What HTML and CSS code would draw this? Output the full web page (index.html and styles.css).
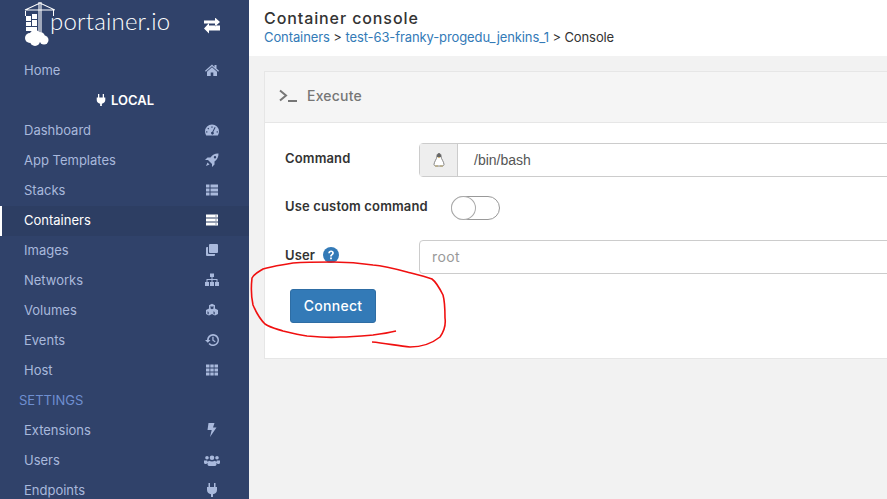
FILE: index.html
```html
<!DOCTYPE html>
<html lang="en">
<head>
    <meta charset="UTF-8">
    <title>Container console</title>
    <link rel="stylesheet" href="styles.css">
</head>
<body>
    <div class="sidebar">
        <div class="brand">
            <div class="logo">
                <svg class="logo-mark" width="31" height="44" viewBox="0 0 31 44">
                    <path d="M15 0v30M17 0v30M1 8L16 1l15 7M1 8h29" fill="none" stroke="#fff" stroke-width="1.100"/>
                    <path d="M29 8h1v6h-1z" fill="#fff"/>
                    <path d="M1 9h1v5H1zM2 14h5v5H2zM8 12h5v5H8zM2 20h5v4H2zM8 18h5v6H8zM2 25h11v4H2z" fill="#fff"/>
                    <circle cx="6" cy="36" r="5" fill="#fff"/>
                    <circle cx="11" cy="33.500" r="5.500" fill="#fff"/>
                    <circle cx="16" cy="35" r="5" fill="#fff"/>
                    <circle cx="20" cy="38" r="4.500" fill="#fff"/>
                    <circle cx="11" cy="39" r="5" fill="#fff"/>
                </svg>
                <span class="logo-text">portainer.io</span>
            </div>
            <svg class="toggle-icon" width="18" height="16" viewBox="0 0 18 16">
                <path d="M1 3h11V0l5 4.500L12 9V6H1zM17 8H6V5.500L1 11l5 5v-3h11z" fill="#fff" transform="translate(0 -.5)"/>
            </svg>
        </div>
        <ul class="nav">
            <li class="nav-item"><span>Home</span>
                <svg class="icon" viewBox="0 0 14 14"><path d="M7 1.500L0 7.800l.8.900L7 3.200l6.200 5.500.8-.900-2.500-2.200V2h-2v2zM2 8.700V13h3.700V9.500h2.600V13H12V8.700L7 4.300z"/></svg>
            </li>
            <li class="nav-title"><svg class="icon-small" viewBox="0 0 14 14"><path d="M3.500 0h1.500v4H9V0h1.500v4H12v3c0 2.500-2 4-4 4.300V14H6v-2.700C4 11 2 9.500 2 7V4h1.500z"/></svg> LOCAL</li>
            <li class="nav-item"><span>Dashboard</span>
                <svg class="icon" viewBox="0 0 14 14"><path fill-rule="evenodd" d="M7 1.500a7 7 0 0 0-7 7c0 1.500.5 2.800 1.200 4h11.600c.7-1.200 1.200-2.500 1.200-4a7 7 0 0 0-7-7zM7 3.200l.9.900-.9.900-.9-.9zM3.300 4.700l.9.900-.9.900-.9-.9zM1.800 8l.9.900-.9.900-.9-.9zM9.700 4l.9.400L8.300 9a1.400 1.400 0 1 1-1-.3zM12.200 8l.9.900-.9.900-.9-.9z"/></svg>
            </li>
            <li class="nav-item"><span>App Templates</span>
                <svg class="icon" viewBox="0 0 14 14"><path fill-rule="evenodd" d="M13.500.500C10 .300 7.500 1.800 5.500 4.500H2.500L0 7h3l4 4v3l2.500-2.500v-3c2.700-2 4.200-4.500 4-8.500zM10 3a1.200 1.200 0 1 1 0 2.400A1.200 1.200 0 0 1 10 3zM2.500 9.500L1 13l3.500-1.500z"/></svg>
            </li>
            <li class="nav-item"><span>Stacks</span>
                <svg class="icon" viewBox="0 0 14 14"><path d="M1 1.500h3.500v3H1zM5.500 1.500H13v3H5.500zM1 5.500h3.500v3H1zM5.500 5.500H13v3H5.500zM1 9.500h3.500v3H1zM5.500 9.500H13v3H5.500z"/></svg>
            </li>
            <li class="nav-item active"><span>Containers</span>
                <svg class="icon" viewBox="0 0 14 14"><path fill-rule="evenodd" d="M1 1.500h12v3H1zM1 5.500h12v3H1zM1 9.500h12v3H1zM10 2.700v.6h2v-.6zM10 6.700v.6h2v-.6zM10 10.700v.6h2v-.6z"/></svg>
            </li>
            <li class="nav-item"><span>Images</span>
                <svg class="icon" viewBox="0 0 14 14"><path d="M5 1h7a1 1 0 0 1 1 1v7a1 1 0 0 1-1 1H5a1 1 0 0 1-1-1V2a1 1 0 0 1 1-1zM3 4v6a1 1 0 0 0 1 1h6v1a1 1 0 0 1-1 1H2a1 1 0 0 1-1-1V5a1 1 0 0 1 1-1z"/></svg>
            </li>
            <li class="nav-item"><span>Networks</span>
                <svg class="icon" viewBox="0 0 16 14"><path d="M6 .500h4v3.500H8.500v2H13.500v3h1.500v4h-4v-4h1.500v-2h-4v2H10v4H6v-4h1.500v-2h-4v2H5v4H1v-4h1.500v-3h5v-2H6z"/></svg>
            </li>
            <li class="nav-item"><span>Volumes</span>
                <svg class="icon" viewBox="0 0 14 14"><path fill-rule="evenodd" d="M7 .800l3 1.500v3.200l3 1.400v4l-3 1.700-3-1.600-3 1.600-3-1.700v-4l3-1.400V2.300zM5.500 3v2.500L7 6.300l1.500-.8V3L7 3.800zM2.500 8.300v2.500l1.200.7V9zM8.500 8.300v2.500l1.200.7V9z"/></svg>
            </li>
            <li class="nav-item"><span>Events</span>
                <svg class="icon" viewBox="0 0 14 14"><path d="M8 1a6 6 0 1 1-4.500 10l1.200-1.100A4.400 4.400 0 1 0 3.700 7H5.500L2.800 9.800 0 7h2A6 6 0 0 1 8 1zM7.300 3.800h1.300v3.200l2 1.300-.7 1-2.600-1.700z"/></svg>
            </li>
            <li class="nav-item"><span>Host</span>
                <svg class="icon" viewBox="0 0 14 14"><path d="M1 1.500h3.500v3H1zM5.300 1.500h3.400v3H5.300zM9.500 1.500H13v3H9.500zM1 5.500h3.500v3H1zM5.300 5.500h3.400v3H5.300zM9.500 5.500H13v3H9.500zM1 9.500h3.500v3H1zM5.300 9.500h3.400v3H5.300zM9.500 9.500H13v3H9.500z"/></svg>
            </li>
            <li class="nav-section">SETTINGS</li>
            <li class="nav-item"><span>Extensions</span>
                <svg class="icon" viewBox="0 0 14 14"><path d="M3.500 0h6L8 4.500h3.500L5 14l1.700-7H2.500z"/></svg>
            </li>
            <li class="nav-item"><span>Users</span>
                <svg class="icon" viewBox="0 0 16 14"><path d="M8 2.500a2.300 2.300 0 1 1 0 4.600 2.300 2.300 0 0 1 0-4.600zM3 3a1.800 1.800 0 1 1 0 3.600A1.800 1.800 0 0 1 3 3zM13 3a1.800 1.800 0 1 1 0 3.600A1.800 1.800 0 0 1 13 3zM0 7.500h3.200c.2 1 .8 1.500 1.300 2-1.200.4-1.800 1-2 1.500C.5 11 0 10.500 0 9.500zM12.800 7.500H16v2c0 1-.5 1.500-2.500 1.500-.2-.5-.8-1.100-2-1.500.5-.5 1.100-1 1.300-2zM5 7.700c1.800 1 4.200 1 6 0 1 .3 1.500 2 1.500 3.500 0 1-1 1.800-2 1.800h-5c-1 0-2-.8-2-1.800 0-1.500.5-3.200 1.500-3.500z"/></svg>
            </li>
            <li class="nav-item"><span>Endpoints</span>
                <svg class="icon" viewBox="0 0 14 14"><path d="M3.500 0h1.500v4H9V0h1.500v4H12v3c0 2.500-2 4-4 4.300V14H6v-2.700C4 11 2 9.500 2 7V4h1.500z"/></svg>
            </li>
        </ul>
    </div>

    <div class="main">
        <div class="page-header">
            <div class="page-title">Container console</div>
            <div class="crumbs"><a>Containers</a> &gt; <a>test-63-franky-progedu_jenkins_1</a> &gt; Console</div>
        </div>
        <div class="content">
            <div class="card">
                <div class="card-heading">
                    <svg class="terminal-icon" width="18" height="14" viewBox="0 0 18 14">
                        <path d="M1 1.500L7 6.500 1 11.500" fill="none" stroke="#767676" stroke-width="2"/>
                        <path d="M9 11h9v2H9z" fill="#767676"/>
                    </svg>
                    Execute
                </div>
                <div class="card-body">
                    <div class="form-row command-row">
                        <label class="form-label">Command</label>
                        <div class="input-group">
                            <span class="addon">
                                <svg width="12" height="15" viewBox="0 0 12 15">
                                    <path d="M6 .500C4.300.500 3.800 2 3.900 4c0 1.500-2.900 5-2.900 7.500 0 1 .8 1 1.500 1.500h7c.7-.5 1.500-.5 1.500-1.500C11 9 8.100 5.500 8.100 4 8.200 2 7.700.500 6 .500z" fill="#fff" stroke="#777" stroke-width=".9"/>
                                    <path d="M6 .500C4.300.500 3.800 2 3.900 4h4.200C8.200 2 7.700.500 6 .500z" fill="#666"/>
                                    <path d="M4.800 4h2.400L6 5.300z" fill="#c9a24a"/>
                                    <path d="M2 13.500h3v-1H2zM7 13.500h3v-1H7z" fill="#b5a46a"/>
                                </svg>
                            </span>
                            <span class="input-value">/bin/bash</span>
                        </div>
                    </div>
                    <div class="form-row toggle-row">
                        <label class="form-label">Use custom command</label>
                        <span class="switch"><span class="knob"></span></span>
                    </div>
                    <div class="form-row">
                        <label class="form-label">User
                            <svg class="help-icon" width="16" height="16" viewBox="0 0 16 16">
                                <circle cx="8" cy="8" r="8" fill="#337ab7"/>
                                <path d="M5.200 6.200C5.300 4.500 6.500 3.500 8.100 3.500c1.600 0 2.800 1 2.800 2.400 0 2-2.100 2-2.100 3.600H7.100c0-2.500 2-2.500 2-3.600 0-.5-.4-.9-1-.9-.7 0-1.100.4-1.200 1.200zM7.100 10.400h1.800v1.900H7.100z" fill="#fff"/>
                            </svg>
                        </label>
                        <div class="text-input">root</div>
                    </div>
                    <button class="btn-connect" type="button">Connect</button>
                </div>
            </div>
        </div>
    </div>

    <!-- red marker ring drawn over the screenshot -->
    <svg class="scribble" width="887" height="499" viewBox="0 0 887 499">
        <path d="M372 342C385 343 398 346 410 347C420 347 430 345 440 337C445 330 446 325 445 318C445 308 445 302 443 295C439 287 436 282 432 279C424 276 415 274 407 272C396 269 385 266 373 265C360 263 347 262 333 262C320 262 306 262 293 263C283 265 273 266 263 269C258 272 254 274 252 278C251 287 251 296 253 305C256 312 260 319 265 324C271 328 277 329 283 331C291 333 299 335 307 336C318 337 329 338 340 337C352 337 362 336 373 335C381 334 388 333 396 331" fill="none" stroke="#f01010" stroke-width="1.600"/>
    </svg>
</body>
</html>
```

FILE: styles.css
```css
html, body {
    height: 100%;
}
body {
    margin: 0;
    display: flex;
    height: 499px;
    overflow: hidden;
    font-family: Inter, "Open Sans", sans-serif;
    font-size: 13px;
    color: #333;
    background-color: #f2f2f2;
}
.sidebar {
    width: 249px;
    flex: none;
    background-color: #30426a;
    overflow: hidden;
}
.brand {
    height: 56px;
    display: flex;
    align-items: flex-start;
    justify-content: space-between;
    padding-left: 24px;
    padding-right: 28px;
}
.logo {
    display: flex;
    align-items: flex-start;
    padding-top: 2px;
}
.logo-mark {
    margin-right: -5px;
}
.logo-text {
    font-family: Lato, sans-serif;
    font-weight: 300;
    font-size: 24px;
    letter-spacing: 0.2px;
    color: #fff;
    margin-top: 4px;
}
.toggle-icon {
    margin-top: 18px;
}
.nav {
    list-style: none;
    margin: 0;
    padding: 0;
}
.nav-item {
    height: 30px;
    box-sizing: border-box;
    display: flex;
    align-items: center;
    justify-content: space-between;
    padding: 0 29px 2px 24px;
    color: #a9b9dc;
    fill: #a9b9dc;
}
.nav-item.active {
    background-color: #2d3e63;
    border-left: 2px solid #fff;
    padding-left: 22px;
    color: #fff;
    fill: #fff;
}
.icon {
    width: 16px;
    height: 14px;
}
.nav-title {
    height: 30px;
    box-sizing: border-box;
    padding-bottom: 2px;
    display: flex;
    align-items: center;
    justify-content: center;
    gap: 4px;
    font-weight: 600;
    color: #fff;
    fill: #fff;
}
.icon-small {
    width: 12px;
    height: 14px;
}
.nav-section {
    height: 30px;
    line-height: 28px;
    padding-left: 19px;
    color: #6f8fd0;
}
.main {
    flex: 1;
    min-width: 0;
    overflow: hidden;
}
.page-header {
    height: 56px;
    box-sizing: border-box;
    background-color: #fff;
    padding: 8px 15px 0;
}
.page-title {
    font-size: 16px;
    font-weight: 500;
    letter-spacing: 0.9px;
    line-height: 20px;
    color: #333;
}
.crumbs {
    font-size: 13px;
    letter-spacing: -0.1px;
    line-height: 18px;
    white-space: nowrap;
}
.crumbs a {
    color: #337ab7;
}
.content {
    padding: 15px;
}
.card {
    width: 1000px;
    height: 288px;
    box-sizing: border-box;
    background-color: #fff;
    border: 1px solid #e6e6e6;
}
.card-heading {
    height: 51px;
    box-sizing: border-box;
    display: flex;
    align-items: center;
    gap: 10px;
    padding: 0 0 3px 14px;
    background-color: #f5f5f5;
    border-bottom: 1px solid #e6e6e6;
    color: #767676;
    font-size: 14px;
    font-weight: 500;
    letter-spacing: 0.2px;
}
.card-body {
    padding: 20px 20px 0;
}
.form-row {
    display: flex;
    align-items: center;
    height: 34px;
    margin-bottom: 20px;
}
.command-row {
    margin-bottom: 19px;
}
.toggle-row {
    height: 24px;
    margin-bottom: 20px;
}
.form-label {
    width: 134px;
    flex: none;
    margin-top: -4px;
    font-weight: 600;
    font-size: 13px;
    letter-spacing: 0.15px;
    white-space: nowrap;
    color: #333;
    display: flex;
    align-items: center;
    gap: 8px;
}
.input-group {
    display: flex;
    flex: 1;
    height: 34px;
    box-sizing: border-box;
    border: 1px solid #ccc;
    border-radius: 4px;
}
.addon {
    width: 37px;
    display: flex;
    align-items: center;
    justify-content: center;
    background-color: #eee;
    border-right: 1px solid #ccc;
}
.input-value {
    font-family: "Liberation Sans", Arial, sans-serif;
    font-size: 14px;
    line-height: 32px;
    padding-left: 16px;
    color: #555;
}
.text-input {
    flex: 1;
    height: 34px;
    box-sizing: border-box;
    border: 1px solid #ccc;
    border-radius: 4px;
    line-height: 32px;
    padding-left: 12px;
    font-size: 14px;
    letter-spacing: 0.4px;
    color: #999;
}
.switch {
    display: block;
    width: 49px;
    height: 24px;
    margin-left: 32px;
    box-sizing: border-box;
    border: 1px solid #999;
    border-radius: 12px;
    background-color: #fff;
}
.knob {
    display: block;
    width: 25px;
    height: 24px;
    margin: -1px;
    box-sizing: border-box;
    border: 1px solid #aaa;
    border-radius: 50%;
    background-color: #fff;
}
.help-icon {
    margin-top: -1px;
}
.btn-connect {
    display: block;
    width: 86px;
    height: 34px;
    margin: -5px 0 0 5px;
    padding: 0 0 2px;
    background-color: #337ab7;
    color: #fff;
    border: 1px solid #2e6da4;
    border-radius: 3px;
    font-family: inherit;
    font-size: 14px;
    font-weight: 500;
    letter-spacing: 0.3px;
}
.scribble {
    position: absolute;
    left: 0;
    top: 0;
    pointer-events: none;
}
```
